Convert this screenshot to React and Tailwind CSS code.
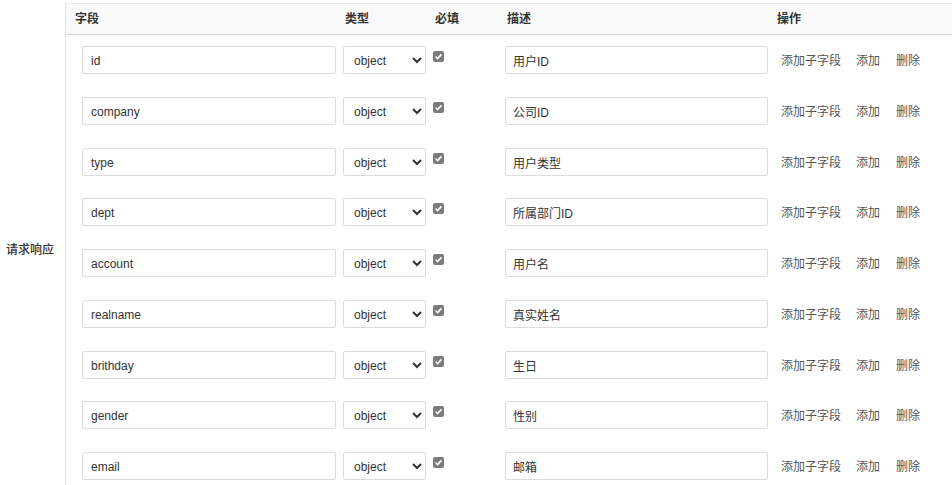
const rows = [
  { name: "id", desc: "用户ID" },
  { name: "company", desc: "公司ID" },
  { name: "type", desc: "用户类型" },
  { name: "dept", desc: "所属部门ID" },
  { name: "account", desc: "用户名" },
  { name: "realname", desc: "真实姓名" },
  { name: "brithday", desc: "生日" },
  { name: "gender", desc: "性别" },
  { name: "email", desc: "邮箱" },
];

function CheckedBox() {
  return (
    <span className="ml-[7px] mt-[5px] flex h-[11px] w-[11px] shrink-0 items-center justify-center rounded-[2px] bg-[#7b7b7b]">
      <svg width="9" height="9" viewBox="0 0 10 10">
        <path d="M1.8 5.2 L4 7.3 L8.3 2.6" fill="none" stroke="#fff" strokeWidth="1.8" />
      </svg>
    </span>
  );
}

function FieldRow({ row }) {
  return (
    <div className="flex h-[50.75px] items-start pt-[11px]">
      <input
        readOnly
        value={row.name}
        className="ml-[16px] h-[28px] w-[254px] rounded-[2px] border border-[#dcdcdc] bg-white px-[8px] pt-[2px] text-[12px] text-[#333] outline-none"
      />
      <select
        defaultValue="object"
        className="ml-[7px] h-[28px] w-[83px] rounded-[2px] border border-[#dcdcdc] bg-white pl-[6px] pt-[2px] text-[12px] text-[#333] outline-none"
      >
        <option value="object">object</option>
        <option value="string">string</option>
        <option value="number">number</option>
      </select>
      <CheckedBox />
      <input
        readOnly
        value={row.desc}
        className="ml-[61px] h-[28px] w-[263px] rounded-[2px] border border-[#dcdcdc] bg-white px-[7px] pt-[1px] text-[12px] text-[#333] outline-none"
      />
      <div className="ml-[13px] flex h-[28px] items-center pt-[2px] text-[12px] text-[#555]">
        <span className="cursor-pointer">添加子字段</span>
        <span className="ml-[15px] cursor-pointer">添加</span>
        <span className="ml-[16px] cursor-pointer">删除</span>
      </div>
    </div>
  );
}

export default function App() {
  return (
    <div
      className="flex bg-white pt-[3px]"
      style={{ fontFamily: '"Liberation Sans", "Noto Sans CJK SC", sans-serif' }}
    >
      <div className="flex w-[65px] shrink-0 items-center pl-[6px] pt-[6px] text-[12px] font-medium text-[#333]">
        请求响应
      </div>
      <div className="flex-1 border-l border-[#e4e4e4]">
        <div className="flex h-[32px] items-center border-t border-b border-t-[#e8e8e8] border-b-[#d3d8df] bg-[#fafafa] text-[12px] font-bold text-[#333]">
          <span className="ml-[9px] w-[270px]">字段</span>
          <span className="w-[90px]">类型</span>
          <span className="w-[72px]">必填</span>
          <span className="w-[270px]">描述</span>
          <span>操作</span>
        </div>
        {rows.map((row) => (
          <FieldRow key={row.name} row={row} />
        ))}
      </div>
    </div>
  );
}
